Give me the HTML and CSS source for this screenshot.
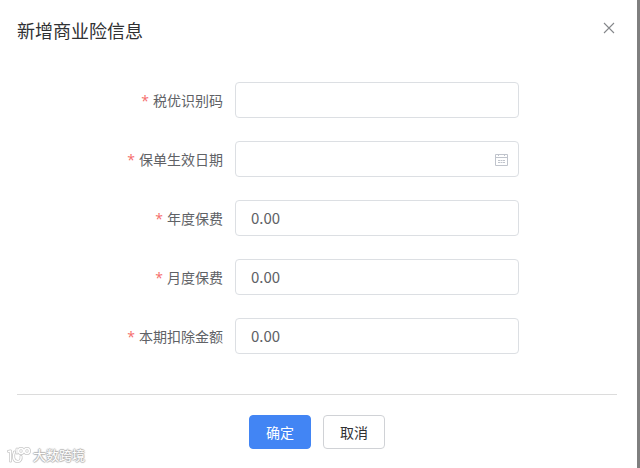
FILE: index.html
```html
<!DOCTYPE html>
<html lang="zh-CN">
<head>
  <meta charset="UTF-8">
  <title>新增商业险信息</title>
  <link rel="stylesheet" href="styles.css">
</head>
<body>

  <div class="dialog">
    <div class="header">
      <h1>新增商业险信息</h1>
      <button type="button" class="close" aria-label="关闭">
        <svg width="12" height="12" viewBox="0 0 12 12"><path d="M1 1 L11 11 M11 1 L1 11" fill="none" stroke="#85878b" stroke-width="1.1"/></svg>
      </button>
    </div>

    <form id="insuranceForm">
      <div class="fields">
        <div class="row">
          <label for="codigo">税优识别码</label>
          <div class="control"><input type="text" id="codigo" required></div>
        </div>

        <div class="row">
          <label for="fecha">保单生效日期</label>
          <div class="control">
            <input type="text" id="fecha" required>
            <svg class="calendar" width="13" height="13" viewBox="0 0 13 13">
              <path d="M.5 1.5 H12.5 V12.5 H.5 Z M.5 4.5 H12.5" fill="none" stroke="#c0c4cc"/>
              <path d="M3.5 1 V3 M9.5 1 V3" stroke="#c0c4cc"/>
              <path d="M3 7.5 H10 M3 9.5 H10" stroke="#c0c4cc" stroke-dasharray="2 .5"/>
            </svg>
          </div>
        </div>

        <div class="row">
          <label for="anual">年度保费</label>
          <div class="control"><input type="text" id="anual" value="0.00" required></div>
        </div>

        <div class="row">
          <label for="mensual">月度保费</label>
          <div class="control"><input type="text" id="mensual" value="0.00" required></div>
        </div>

        <div class="row">
          <label for="deduccion">本期扣除金额</label>
          <div class="control"><input type="text" id="deduccion" value="0.00" required></div>
        </div>
      </div>

      <div class="footer">
        <button type="submit" class="button primary">确定</button>
        <button type="button" class="button">取消</button>
      </div>
    </form>
  </div>

  <div class="watermark">
    <svg width="24" height="17" viewBox="0 0 24 17" fill="none" stroke-linecap="round" stroke-linejoin="round">
      <g stroke="#c8c8c8" stroke-width="3">
        <path d="M1.500 4.500 L3.500 4 V14"/>
        <path d="M7.500 5 C5.500 9 6.500 14.500 10.500 14.500 C13.500 14.500 14.500 12 14 9.500"/>
        <path d="M10 2 V6"/>
        <circle cx="14" cy="4" r="2.4"/>
        <circle cx="20" cy="4" r="2.4"/>
      </g>
      <g stroke="#fff" stroke-width="1.5">
        <path d="M1.500 4.500 L3.500 4 V14"/>
        <path d="M7.500 5 C5.500 9 6.500 14.500 10.500 14.500 C13.500 14.500 14.500 12 14 9.500"/>
        <path d="M10 2 V6"/>
        <circle cx="14" cy="4" r="2.4"/>
        <circle cx="20" cy="4" r="2.4"/>
      </g>
    </svg>
    <span>大数跨境</span>
  </div>

</body>
</html>
```

FILE: styles.css
```css
* {
  box-sizing: border-box;
}

body {
  margin: 0;
  background-color: #7f7f7f;
  font-family: "Noto Sans CJK SC", sans-serif;
  font-size: 14px;
  color: #606266;
}

.dialog {
  min-height: 100vh;
  margin-right: 3px;
  padding: 16px 20px 19px 17px;
  background-color: #fff;
}

.header {
  display: flex;
  justify-content: space-between;
  align-items: flex-start;
  height: 66px;
}

h1 {
  margin: 0;
  font-size: 18px;
  font-weight: 400;
  line-height: 29px;
  color: #303133;
}

.close {
  display: flex;
  padding: 6px 2px;
  border: none;
  background: none;
  cursor: pointer;
}

.fields {
  display: grid;
  gap: 23px;
  padding-right: 98px;
  padding-bottom: 40px;
}

.row {
  display: grid;
  grid-template-columns: 206px 1fr;
  column-gap: 12px;
}

label {
  text-align: right;
  line-height: 36px;
}

label::before {
  content: "*";
  margin-right: 4px;
  font-family: "Open Sans", sans-serif;
  line-height: 1;
  color: #f56c6c;
}

.control {
  position: relative;
}

.control input {
  display: block;
  width: 100%;
  height: 36px;
  padding: 0 15px 2px;
  border: 1px solid #dcdfe3;
  border-radius: 4px;
  font-family: inherit;
  font-size: 15px;
  color: #606266;
  outline: none;
}

.control input:focus {
  border-color: #4285f4;
}

.calendar {
  position: absolute;
  top: 12px;
  right: 11px;
}

.footer {
  display: flex;
  justify-content: center;
  gap: 12px;
  padding-top: 20px;
  border-top: 1px solid #dcdcdc;
}

.button {
  width: 62px;
  height: 34px;
  padding: 0;
  border: 1px solid #d0d2d6;
  border-radius: 4px;
  background-color: #fff;
  font-family: inherit;
  font-size: 14px;
  color: #303133;
  cursor: pointer;
}

.primary {
  border-color: #4285f4;
  background-color: #4285f4;
  color: #fff;
}

.watermark {
  position: absolute;
  left: 7px;
  bottom: 4px;
  display: flex;
  align-items: center;
  gap: 2px;
  font-size: 13px;
  line-height: 18px;
  color: #fff;
  text-shadow: 1px 0 1px #b4b4b4, -1px 0 1px #b4b4b4, 0 1px 1px #b4b4b4, 0 -1px 1px #b4b4b4;
}
```
